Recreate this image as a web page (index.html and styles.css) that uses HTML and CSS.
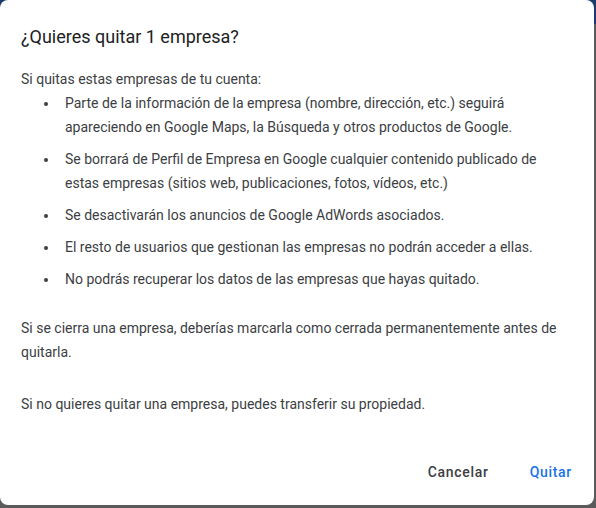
FILE: index.html
```html
<!DOCTYPE html>
<html lang="es">
<head>
<meta charset="utf-8">
<link rel="stylesheet" href="styles.css">
</head>
<body>
<div class="dialog">
  <h2 class="title">¿Quieres quitar 1 empresa?</h2>
  <div class="content">
    <p class="lead">Si quitas estas empresas de tu cuenta:</p>
    <ul class="list">
      <li>Parte de la información de la empresa (nombre, dirección, etc.) seguirá apareciendo en Google Maps, la Búsqueda y otros productos de Google.</li>
      <li>Se borrará de Perfil de Empresa en Google cualquier contenido publicado de estas empresas (sitios web, publicaciones, fotos, vídeos, etc.)</li>
      <li>Se desactivarán los anuncios de Google AdWords asociados.</li>
      <li>El resto de usuarios que gestionan las empresas no podrán acceder a ellas.</li>
      <li>No podrás recuperar los datos de las empresas que hayas quitado.</li>
    </ul>
    <p class="para">Si se cierra una empresa, deberías marcarla como cerrada permanentemente antes de quitarla.</p>
    <p class="para">Si no quieres quitar una empresa, puedes transferir su propiedad.</p>
  </div>
  <div class="actions">
    <button class="btn btn-cancel">Cancelar</button>
    <button class="btn btn-primary">Quitar</button>
  </div>
</div>
</body>
</html>
```
FILE: styles.css
```css
* { box-sizing: border-box; }
html, body { margin: 0; height: 100%; }
body {
  background: linear-gradient(#1b3a6b 0, #1b3a6b 24px, #5a5a5a 24px);
  font-family: Roboto, "Noto Sans", Arial, sans-serif;
  overflow: hidden;
}
.dialog {
  width: 594px;
  height: 505px;
  background: #fff;
  border-radius: 8px;
  display: flex;
  flex-direction: column;
}
.title {
  margin: 0;
  padding: 25px 21px 0;
  font-size: 18px;
  line-height: 24px;
  font-weight: 400;
  color: #202124;
}
.content {
  padding: 18px 21px 0;
  font-size: 14px;
  line-height: 24px;
  color: #3c4043;
}
.lead { margin: 0; }
.list {
  list-style: none;
  margin: 0 0 25px;
  padding: 0;
}
.list li {
  display: flex;
  margin-bottom: 8px;
}
.list li:last-child { margin-bottom: 0; }
.list li::before {
  content: "";
  flex: none;
  width: 4px;
  height: 4px;
  border-radius: 50%;
  background: #3c4043;
  margin: 11px 17px 0 23px;
}
.para { margin: 0 0 28px; }
.actions {
  margin-top: auto;
  display: flex;
  justify-content: flex-end;
  gap: 17px;
  padding: 0 10px 15px 0;
}
.btn {
  font-family: Roboto, "Noto Sans", Arial, sans-serif;
  font-size: 14px;
  font-weight: 500;
  letter-spacing: 0.7px;
  height: 36px;
  padding: 0 12px;
  border: 0;
  background: transparent;
  border-radius: 4px;
}
.btn-cancel { color: #3c4043; }
.btn-primary { color: #1a73e8; }
```
